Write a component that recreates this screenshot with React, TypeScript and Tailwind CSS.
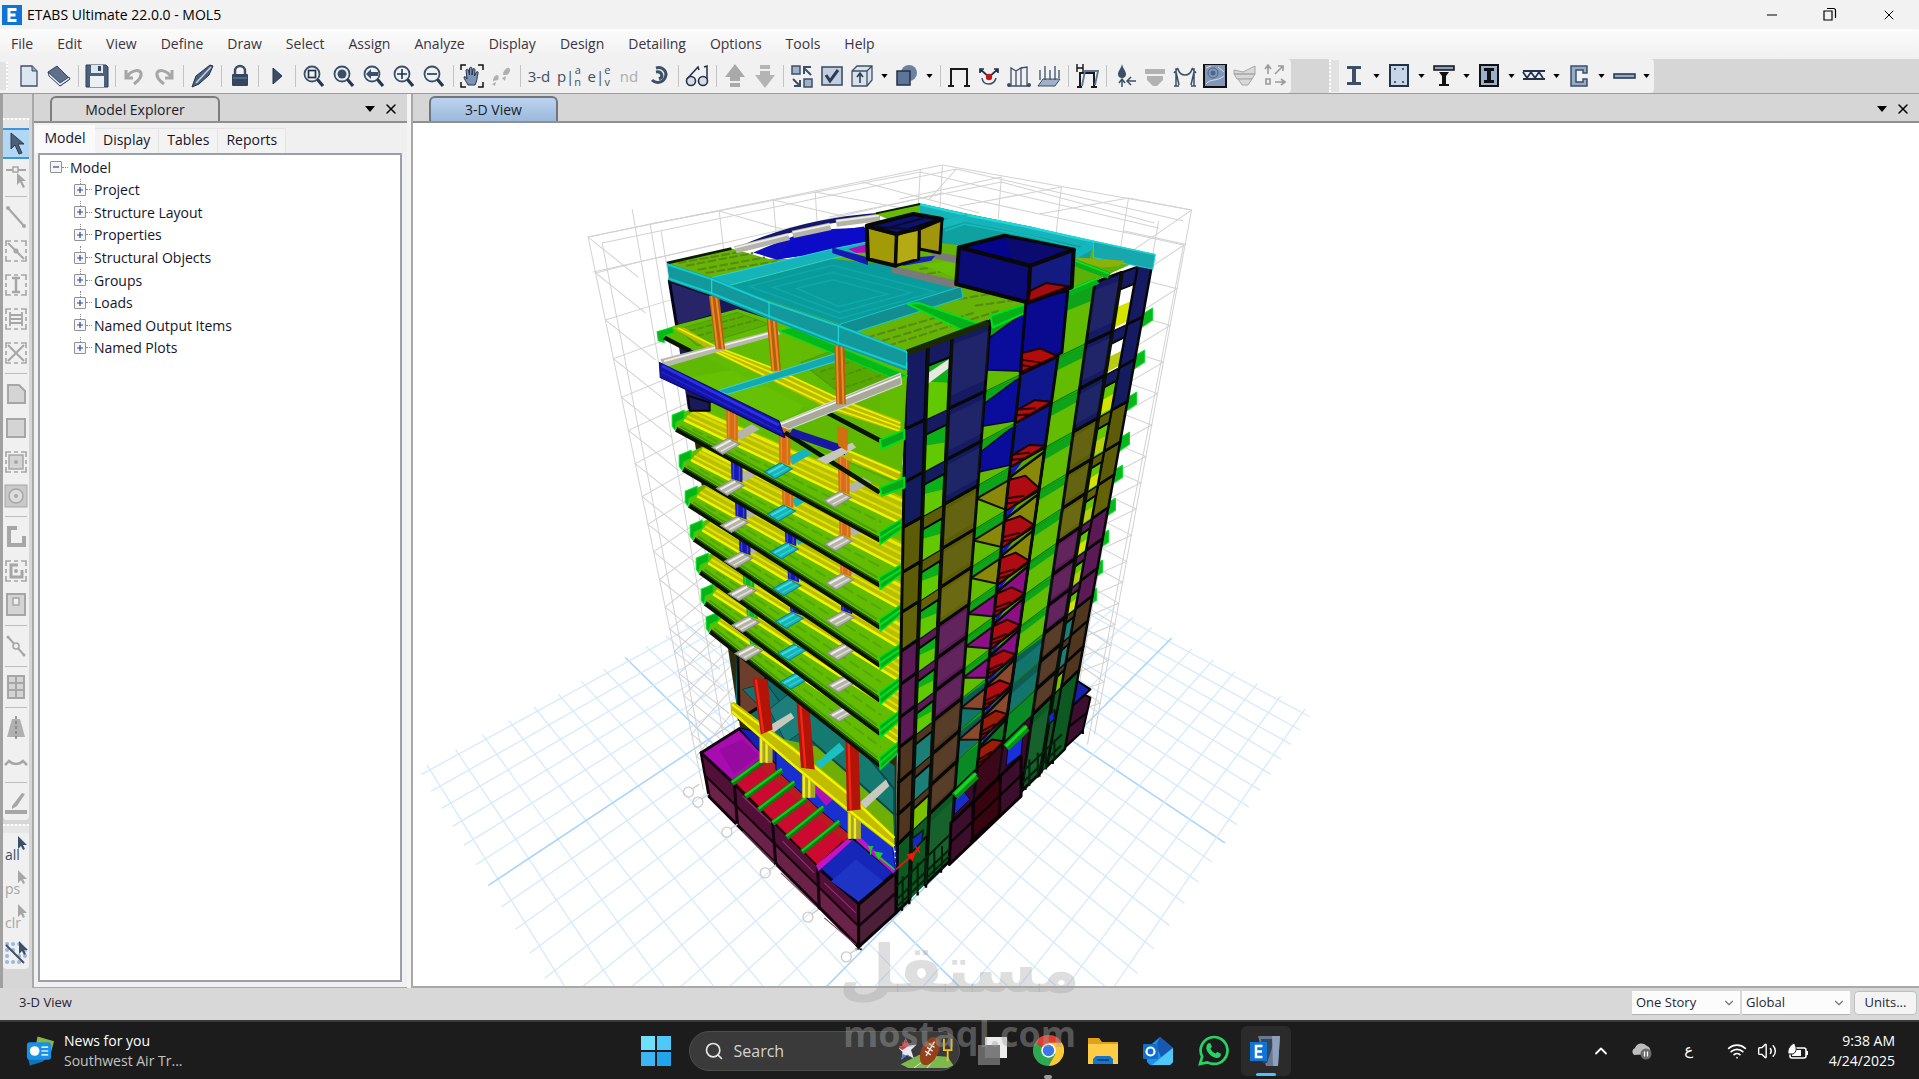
import React from "react";
import { ChevronUp, ChevronDown, Search, Minus, X, Wifi, Volume2 } from "lucide-react";

/* ---------- geometry helpers for the model drawing ---------- */
type Pt = [number, number];
type Ln = [number, number, number, number];

const pts = (a: Pt[]) => a.map((p) => `${p[0].toFixed(1)},${p[1].toFixed(1)}`).join(" ");

function cross(a: Ln, b: Ln): Pt {
  const [x1, y1, x2, y2] = a;
  const [x3, y3, x4, y4] = b;
  const d = (x1 - x2) * (y3 - y4) - (y1 - y2) * (x3 - x4);
  const p = x1 * y2 - y1 * x2;
  const q = x3 * y4 - y3 * x4;
  return [(p * (x3 - x4) - (x1 - x2) * q) / d, (p * (y3 - y4) - (y1 - y2) * q) / d];
}

/* Least-squares plane-to-screen projection through the given point pairs */
function homography(src: Pt[], dst: Pt[]) {
  const rows: number[][] = [];
  src.forEach(([u0, v0], i) => {
    const u = u0 / 10, v = v0 / 10;
    const x = dst[i][0] / 1000, y = dst[i][1] / 1000;
    rows.push([u, v, 1, 0, 0, 0, -u * x, -v * x, x]);
    rows.push([0, 0, 0, u, v, 1, -u * y, -v * y, y]);
  });
  const m: number[][] = [];
  for (let r = 0; r < 8; r++) {
    m.push([]);
    for (let c = 0; c < 9; c++) m[r].push(rows.reduce((s, row) => s + row[r] * row[c], 0));
  }
  for (let c = 0; c < 8; c++) {
    let p = c;
    for (let r = c; r < 8; r++) if (Math.abs(m[r][c]) > Math.abs(m[p][c])) p = r;
    [m[c], m[p]] = [m[p], m[c]];
    for (let r = 0; r < 8; r++) {
      if (r === c) continue;
      const f = m[r][c] / m[c][c];
      for (let k = c; k < 9; k++) m[r][k] -= f * m[c][k];
    }
  }
  const h = m.map((row, i) => row[8] / row[i]);
  return (u0: number, v0: number): Pt => {
    const u = u0 / 10, v = v0 / 10;
    const w = (h[6] * u + h[7] * v + 1) / 1000;
    return [(h[0] * u + h[1] * v + h[2]) / w, (h[3] * u + h[4] * v + h[5]) / w];
  };
}

const P = ({ d, f, s = "none", w = 1, o = 1 }: { d: string; f: string; s?: string; w?: number; o?: number }) => (
  <polygon points={d} fill={f} stroke={s} strokeWidth={w} opacity={o} strokeLinejoin="round" vectorEffect="non-scaling-stroke" />
);

/* ---------- ground grid ---------- */
const ground = homography(
  [[-8, 3], [6, -6], [18, 6], [10, 16], [-8, -6], [0, -6], [18, 10], [18, 16], [-8, 0]],
  [[1110, 612], [1128, 959], [553, 973], [627, 657], [1304, 715], [1218, 838], [497, 886], [437, 770], [1170, 643]]
);
function GroundGrid() {
  const out: React.ReactNode[] = [];
  for (let i = -8; i <= 18; i++) {
    const a = ground(i, -6.3), b = ground(i, 16.3);
    out.push(<line key={`a${i}`} x1={a[0]} y1={a[1]} x2={b[0]} y2={b[1]} stroke={i % 10 === 0 ? "#a9d5fb" : "#d6eafd"} strokeWidth={i % 10 === 0 ? 1.6 : 1.3} />);
  }
  for (let j = -6; j <= 16; j++) {
    const a = ground(-8.3, j), b = ground(18.3, j);
    out.push(<line key={`b${j}`} x1={a[0]} y1={a[1]} x2={b[0]} y2={b[1]} stroke={j % 10 === 0 ? "#a9d5fb" : "#d6eafd"} strokeWidth={j % 10 === 0 ? 1.6 : 1.3} />);
  }
  return <g>{out}</g>;
}

/* ---------- storey wire frame ---------- */
const rings = [0, 0.065, 0.15, 0.22, 0.29, 0.35, 0.41, 0.47, 0.52, 0.57, 0.62, 0.67, 0.71, 0.75, 0.79, 0.83, 0.86, 0.9, 0.94];
const frameLeft: Ln[] = [
  [589, 238, 704, 790], [603, 244, 712, 800], [651, 225, 738, 745], [662, 232, 745, 750], [720, 212, 776, 700], [633, 210, 730, 770], [774, 201, 810, 620], [816, 193, 840, 600],
];
const frameRight: Ln[] = [
  [1192, 211, 1095, 735], [1184, 246, 1088, 745], [1159, 222, 1072, 730], [1129, 199, 1050, 700], [1062, 188, 1010, 640], [1002, 178, 970, 600], [943, 167, 920, 560], [921, 170, 900, 560],
];
const at = (l: Ln, t: number): Pt => [l[0] + (l[2] - l[0]) * t, l[1] + (l[3] - l[1]) * t];
function WireFrame() {
  const seg: React.ReactNode[] = [];
  [...frameLeft, ...frameRight].forEach((l, i) => seg.push(<line key={i} x1={l[0]} y1={l[1]} x2={l[2]} y2={l[3]} />));
  rings.forEach((t, i) => {
    const a = at(frameLeft[0], t), b = at(frameLeft[2], t), c = at(frameLeft[4], t);
    seg.push(<polyline key={`l${i}`} points={pts([[a[0] + 50, a[1] + 40], a, b, c])} fill="none" />);
    const d = at(frameRight[0], t), e = at(frameRight[3], t), f = at(frameRight[1], t);
    seg.push(<polyline key={`r${i}`} points={pts([e, d, [f[0] - 60, f[1] + 12]])} fill="none" />);
  });
  return (
    <g stroke="#d2d2d2" strokeWidth={1}>
      {seg}
      <polyline fill="none" points="589,238 943,166 1192,211" />
      <polyline fill="none" points="603,244 957,170 1184,222" />
      <polyline fill="none" points="651,225 921,173 1159,229" />
      <polyline fill="none" points="594,273 720,245 943,194 1184,246" />
      <polyline fill="none" points="1155,224 1002,183 830,218" />
      <path fill="none" d="M1129 199L1040 215M1062 188L960 207M1002 178L900 200M957 170L930 200M774 201L900 230M720 212L800 235M816 193L930 214M863 183L980 214" />
    </g>
  );
}

/* ---------- tower: right-hand facade ---------- */
const cornerY = [352, 430, 483, 528, 573, 613, 652, 685, 718, 748, 783, 815, 845, 913];
const farPt: Pt[] = [[1153, 262], [1153, 313], [1145, 355], [1137, 397], [1130, 437], [1123, 470], [1116, 503], [1109, 535], [1103, 565], [1097, 593], [1090, 620], [1083, 648], [1078, 672], [1063, 752]];
const cornerX = (y: number) => 907 - ((y - 352) * 10) / 561;
const levels: Ln[] = cornerY.map((y, k) => [cornerX(y), y, farPt[k][0], farPt[k][1]]);
const V: Ln[] = [
  [907, 352, 897, 913], [928, 350, 912, 827], [952, 338, 929, 817], [991, 320, 950, 863], [1029, 303, 975, 793],
  [1068, 290, 1003, 750], [1096, 280, 1022, 793], [1122, 273, 1046, 740], [1138, 268, 1056, 720], [1153, 263, 1065, 752],
];
const on = (v: number, k: number, t: number): Pt => {
  const a = cross(V[v], levels[k]), b = cross(V[v], levels[k + 1]);
  return [a[0] + (b[0] - a[0]) * t, a[1] + (b[1] - a[1]) * t];
};
const mix = (a: Pt, b: Pt, t = 0.5): Pt => [a[0] + (b[0] - a[0]) * t, a[1] + (b[1] - a[1]) * t];
const wall = ["#151a62", "#151a62", "#141c60", "#5d5c06", "#5d5c06", "#646206", "#5b1a55", "#5b1a55", "#5b1a55", "#50351f", "#50351f", "#50351f", "#0c5a22"];
const inner = ["#00008c", "#10168a", "#10168a", "#10168a", "#8a8808", "#8a8808", "#8a8808", "#8b0f85", "#8b0f85", "#8b0f85", "#8c4a2c", "#8c4a2c", "#0a7a20"];

function RightFacade() {
  const out: React.ReactNode[] = [];
  const poly = (key: string, a: Pt[], f: string, s = "#0a0d0a", w = 2) => out.push(<polygon key={key} points={pts(a)} fill={f} stroke={s} strokeWidth={w} />);
  const quad = (key: string, a: number, b: number, k: number, t0: number, t1: number, f: string, s = "#0a0d0a", w = 2) =>
    poly(key, [on(a, k, t0), on(b, k, t0), on(b, k, t1), on(a, k, t1)], f, s, w);
  const beam = (a: number, b: number, k: number) => {
    const p = cross(V[a], levels[k]), q = cross(V[b], levels[k]);
    out.push(<line key={`gb${a}${k}`} x1={p[0] - 2} y1={p[1] - 3} x2={q[0]} y2={q[1] - 3} stroke="#0a8c18" strokeWidth={10} />);
    out.push(<line key={`gc${a}${k}`} x1={p[0] - 2} y1={p[1] - 5} x2={q[0]} y2={q[1] - 5} stroke="#00d616" strokeWidth={3} />);
    out.push(<line key={`gd${a}${k}`} x1={p[0] - 2} y1={p[1] + 1} x2={q[0]} y2={q[1] + 1} stroke="#00c010" strokeWidth={2} />);
  };
  for (let k = 12; k >= 0; k--) {
    for (const [a, b] of [[3, 4], [5, 6]]) {
      if (k > 10) { quad(`g${a}${k}`, a, b, k, 0, 1, k === 12 ? "#3a0a2c" : "#0a8a24", "#000", 1); continue; }
      quad(`g${a}${k}`, a, b, k, 0, 1, k > 8 ? "#12746a" : "#62bd02", "#1f6a00", 1);
      quad(`gs${a}${k}`, a, b, k, 0.02, 0.3, k > 8 ? "#0d5c56" : "#0ea318", "none", 0);
      if (a === 3 && k > 2) poly(`gt${k}`, [on(4, k, 0.3), on(4, k, 0.98), on(3, k, 0.3)], inner[k + 1], "#111", 2);
      if (a === 3 && k < 3) poly(`gu${k}`, [on(3, k, 0.25), on(4, k, 0.05), on(4, k, 0.95), on(3, k, 0.7)], "#0a0c9c", "#060640", 1.5);
    }
    if (k < 12) {
      quad(`s${k}`, 4, 5, k, 0, 1, k < 3 ? "#10168c" : k < 9 ? "#57a800" : "#157068");
      if (k < 3) {
        poly(`r${k}`, [on(4, k, 0.74), mix(on(4, k, 0.72), on(5, k, 0.72)), on(5, k, 0.96), on(4, k, 1)], "#b00e10", "#200000");
      } else {
        poly(`b${k}`, [on(4, k, 0), mix(on(4, k, 0), on(5, k, 0), 0.4), on(4, k, 0.3)], "#1018c0", "none", 0);
        poly(`t${k}`, [on(4, k, 0.25), on(5, k, 0.1), on(5, k, 0.95)], inner[k + 1], "#0a0a0a", 2.5);
        poly(`r${k}`, [on(4, k, 0.3), mix(on(4, k, 0.35), on(5, k, 0.5), 0.5), on(5, k, 0.95), on(4, k, 1.02)], k > 9 ? "#9c1c0a" : "#ae0c12", "#200000");
      }
      out.push(<path key={`rl${k}`} d={`M${on(4, k, 0.72)}L${mix(on(4, k, 0.9), on(5, k, 0.92), 0.55)}M${on(4, k, 0.84)}L${mix(on(4, k, 1), on(5, k, 0.96), 0.4)}`} stroke="#2a0000" strokeWidth={2} />);
    } else quad(`s${k}`, 4, 5, k, 0, 1, "#3a0818");
    if (k > 0 && k < 12) beam(3, 4, k);
    if (k > 0 && k < 10) beam(5, 6, k);
    if (k > 0 && k < 10) {
      const [x, y] = farPt[k];
      out.push(<polygon key={`tip${k}`} points={`${x - 20},${y + 8} ${x},${y - 4} ${x},${y + 8} ${x - 18},${y + 20}`} fill="#08b81a" stroke="#00e020" />);
    }
  }
  for (const v of [4, 5]) out.push(<line key={`sv${v}`} x1={V[v][0]} y1={V[v][1]} x2={V[v][2]} y2={V[v][3]} stroke="#080c08" strokeWidth={3} />);
  for (let k = 12; k >= 0; k--) {
    const c = wall[k];
    const open = k === 11 ? "#7cc000" : k === 12 ? "#0c5a22" : k > 8 ? "#1b7f78" : "#62c800";
    quad(`o${k}`, 1, 2, k, 0.3, 1, open, "none", 0);
    if (k < 9) poly(`oi${k}`, [on(1, k, 0.3), on(2, k, 0.3), on(2, k, 0.65), on(1, k, 0.5)], "#0cae1a", "none", 0);
    if (k === 0) poly("ow", [on(1, k, 0.4), on(2, k, 0.32), on(2, k, 0.44), on(1, k, 0.55)], "#e8e8e0", "none", 0);
    quad(`oo${k}`, 7, 8, k, 0.3, 1, k < 2 ? "#ffffff" : open, "#111", 1);
    if (k < 9) quad(`op${k}`, 7, 8, k, 0.6, 0.95, k % 2 ? "#b8cc10" : "#d4e400", "none", 0);
    quad(`p1${k}`, 0, 1, k, 0, 1, c, "#060806", 3);
    quad(`p2${k}`, 2, 3, k, 0, 1, c, "#060806", 3);
    quad(`sp${k}`, 1, 2, k, 0, 0.3, c, "#060806", 2);
    quad(`p3${k}`, 6, 7, k, 0, 1, c, "#060806", 3);
    quad(`p4${k}`, 8, 9, k, 0, 1, c, "#060806", 2.5);
    quad(`sq${k}`, 7, 8, k, 0, 0.3, c, "#060806", 2);
    quad(`h1${k}`, 2, 3, k, 0.14, 0.84, "#ffffff0c", "none", 0);
    quad(`h2${k}`, 6, 7, k, 0.14, 0.84, "#ffffff0c", "none", 0);
    for (const v of [1, 2, 7]) {
      const a = on(v, k, 0), b = on(v, k, 1);
      out.push(<line key={`v${v}${k}`} x1={a[0] + 1} y1={a[1]} x2={b[0] + 1} y2={b[1]} stroke="#0a0f08" strokeWidth={3} />);
    }
  }
  return <g strokeLinejoin="round">{out}</g>;
}

/* ---------- tower: left-hand facade ---------- */
const tips: Pt[] = [[667, 264], [658, 333], [661, 370], [673, 421], [680, 461], [686, 497], [691, 531], [697, 564], [702, 595], [707, 623]];
const ends = [0, 447, 495, 543, 588, 630, 668, 703, 736, 768];
const colX = [(y: number) => 716 + (y - 297) * 0.112, (y: number) => 774 + (y - 320) * 0.074, (y: number) => 841 + (y - 350) * 0.022];
const O = "#d96d10", B = "#1418b8", Gn = "#0cb81c";
const colTone: string[][] = [
  ["", "", "", O, B, B, B, Gn, Gn, Gn],
  ["", "", "", O, O, B, B, B, Gn, Gn],
  ["", "", "", O, O, O, B, B, B, Gn],
];
function stripY(k: number, x: number) {
  const [lx, ly] = tips[k];
  const cy = cornerY[k], cx = cornerX(cy);
  return ly - 2 + ((x - lx - 12) / (cx - lx - 12)) * (cy - ly + 2);
}
function LeftFacade() {
  const out: React.ReactNode[] = [];
  for (let k = 9; k >= 3; k--) {
    const [lx, ly] = tips[k];
    const ry = ends[k], cy = cornerY[k], cx = cornerX(cy);
    out.push(
      <g key={k}>
        <polygon points={pts([[lx, ly - 3], [lx + 24, ly - 14], [lx + 26, ly - 42], [cx, cy - 62], [cx, cy], [881, ry - 4], [lx + 4, ly + 8]])} fill="#62bd02" />
        <line x1={lx + 40} y1={ly - 18} x2={cx} y2={cy - 42} stroke="#4cb008" strokeWidth={3} />
        <polygon points={pts([[lx + 24, ly - 13], [cx, cy - 30], [cx, cy - 2], [lx + 11, ly]])} fill="#b9bf00" />
        <line x1={lx + 23} y1={ly - 11} x2={cx} y2={cy - 26} stroke="#e8ec00" strokeWidth={3} />
        <line x1={lx + 20} y1={ly - 8} x2={cx} y2={cy - 18} stroke="#d6da00" strokeWidth={2.5} />
        <line x1={lx + 15} y1={ly - 4} x2={cx} y2={cy - 10} stroke="#dfe300" strokeWidth={2} />
        <line x1={lx + 12} y1={ly} x2={cx} y2={cy - 3} stroke="#f2f400" strokeWidth={2.5} />
        <line x1={lx + 20} y1={ly + 9} x2={882} y2={ry - 20} stroke="#55a806" strokeWidth={2} strokeDasharray="12 4" />
        <line x1={lx + 8} y1={ly + 6} x2={878} y2={ry - 10} stroke="#48a008" strokeWidth={2} />
        <line x1={lx + 4} y1={ly + 9} x2={881} y2={ry - 2} stroke="#0a1404" strokeWidth={5} />
        <line x1={lx + 6} y1={ly + 8} x2={881} y2={ry - 4} stroke="#245a08" strokeWidth={1.3} />
        <polygon points={pts([[lx, ly - 5], [lx + 12, ly - 10], [lx + 12, ly - 2], [lx + 4, ly + 2], [lx + 3, ly + 10], [lx, ly + 6]])} fill="#06b41a" stroke="#00e01c" />
        <polygon points={pts([[880, ry - 10], [902, cy - 8], [902, cy + 2], [881, ry + 2]])} fill="#08a81a" stroke="#00e01c" strokeWidth={1.5} />
        <line x1={880} y1={ry - 4} x2={902} y2={cy - 3} stroke="#00e01c" strokeWidth={2} />
        {[0, 1, 2].map((c) => {
          const x0 = colX[c](cy - 40), y = stripY(k, x0), x = colX[c](y);
          const fill = c === 1 ? "#16b4bc" : "#b4b4aa";
          const yu = stripY(k - 1, x0);
          return (
            <g key={c}>
              <polygon points={pts([[x + 5, y - 12], [x + 20, y - 20], [x + 28, y - 15], [x + 8, y - 4]])} fill={fill} />
              <polygon points={pts([[x - 20, y + 3], [x - 4, y - 6], [x + 8, y], [x - 9, y + 10]])} fill={fill} stroke={c === 1 ? "#0a7f88" : "#8a8a80"} strokeWidth={1} />
              <line x1={x - 16} y1={y + 4} x2={x - 1} y2={y - 4} stroke={c === 1 ? "#40dce0" : "#efefe8"} strokeWidth={2} />
              <line x1={x - 11} y1={y + 7} x2={x + 4} y2={y - 1} stroke={c === 1 ? "#30ccd0" : "#e0e0d8"} strokeWidth={1.5} />
              <polygon points={pts([[x - 6, yu], [x + 6, yu], [x + 6, y - 3], [x - 5, y - 7]])} fill={colTone[c][k]} />
              <path d={`M${x - 3} ${yu}V${y - 7}M${x + 3} ${yu}V${y - 5}`} stroke="#ffffff30" strokeWidth={1.5} />
            </g>
          );
        })}
      </g>
    );
  }
  return <g>{out}</g>;
}

/* Podium, retaining walls and lobby storey */
function Podium() {
  return (
    <g transform="translate(660 700) scale(.33333)">
      <P d="1205,40 1243,-30 1293,-5 1270,95 1205,155" f="#3c0f30" s="#000" w={2} />
      <P d="1243,-30 1250,-58 1293,-30 1250,10 1205,45" f="#1a1fa8" s="#000" w={2} />
      <path d="M1205 100L1280 42" stroke="#0a0006" strokeWidth={6} />
      <P d="126,160 598,615 598,742 150,292" f="#6b2248" s="#12000a" w={3} />
      <P d="126,160 598,615 598,680 138,228" f="#521038" s="#12000a" w={2} />
      <path d="M225 250L235 380M340 370L350 498M475 500L480 630" stroke="#140010" strokeWidth={9} fill="none" />
      <path d="M250 290L335 370M250 395L345 490M370 425L465 520M365 520L470 620M495 550L590 640M495 655L590 735" stroke="#8a3868" strokeWidth={3} />
      <P d="126,160 240,88 320,170 222,250" f="#a80cae" s="#160016" w={3} />
      <P d="180,150 250,120 300,170 225,225" f="#8e0a98" o={0.7} />
      <P d="240,85 300,100 420,200 420,260 330,190" f="#1420b0" s="#050530" />
      <P d="225,250 330,178 580,400 475,500" f="#cc0a30" s="#300008" w={2} />
      <P d="330,178 580,400 555,425 305,205" f="#b81c20" />
      <P d="350,150 700,440 708,510 590,420 480,330 350,210" f="#1830d0" s="#060640" />
      <P d="470,250 520,300 500,320 460,270" f="#b010b8" />
      <P d="480,508 578,412 706,520 598,612" f="#1626b8" s="#02021c" w={3} />
      <P d="515,545 590,480 672,545 598,606" f="#1e34c4" />
      <P d="470,498 565,418 578,424 478,515" f="#c414c8" />
      <P d="600,410 712,515 706,526 588,420" f="#c414c8" />
      {[[218, 252, 310, 185], [258, 292, 368, 212], [298, 332, 405, 250], [340, 372, 440, 298], [382, 414, 492, 325], [428, 458, 540, 368]].map((q) => (
        <g key={q[0]}>
          <line x1={q[0]} y1={q[1]} x2={q[2]} y2={q[3]} stroke="#0a7c10" strokeWidth={17} />
          <line x1={q[0]} y1={q[1] - 4} x2={q[2]} y2={q[3] - 4} stroke="#12cc18" strokeWidth={7} />
        </g>
      ))}
      <P d="230,-170 410,-20 706,200 706,440 230,30" f="#0f6a68" />
      <P d="235,-165 320,-90 320,10 240,60" f="#6c3f2c" s="#0a0a0a" w={3} />
      <P d="250,-30 320,-50 400,60 310,30" f="#17706e" s="#064040" />
      <P d="330,30 430,-50 480,60 380,130" f="#1c7f7c" s="#0a4a4a" />
      <P d="330,110 600,170 700,330 705,420 560,330" f="#6fae06" />
      <P d="450,-10 560,90 705,270 705,345 560,215 440,110" f="#157a70" s="#0a4a48" w={2} />
      <P d="470,190 540,130 556,150 480,210" f="#1cc0c0" />
      <P d="600,310 680,240 690,260 615,330" f="#c8c8be" />
      <P d="320,85 395,40 405,55 335,105" f="#c8c8be" />
      {[[300, 110, 190], [428, 210, 295], [565, 335, 418]].map((q) => (
        <g key={q[0]}>
          <rect x={q[0]} y={q[1]} width={40} height={q[2] - q[1]} fill="#a8a42a" />
          <path d={`M${q[0] + 6} ${q[1]}v${q[2] - q[1]}M${q[0] + 22} ${q[1]}v${q[2] - q[1]}`} stroke="#f0ee20" strokeWidth={7} />
        </g>
      ))}
      <P d="215,10 225,8 400,140 560,270 705,408 705,448 555,330 400,200 215,40" f="#c0bc00" />
      <path d="M218 15L400 148L560 278L705 415M218 36L400 195L556 322L705 440" stroke="#f4f400" strokeWidth={7} fill="none" />
      <P d="280,-65 325,-60 340,90 305,105" f="#b21408" />
      <P d="410,-20 450,20 466,210 425,205" f="#b21408" />
      <P d="558,110 598,150 604,330 563,335" f="#b21408" />
      <path d="M290 -60L312 100M422 0L438 205M568 125L574 330" stroke="#f02818" strokeWidth={7} />
      <path d="M588 748l20 0M590 740l16 12M606 740l-16 12" stroke="#000" strokeWidth={3} />
      <g fill="none" stroke="#cccccc" strokeWidth={4}>
        {[[88, 278], [116, 308], [203, 398], [318, 520], [446, 653], [561, 772]].map((c) => (
          <g key={c[0]}>
            <circle cx={c[0]} cy={c[1]} r={15} />
            <path d={`M${c[0] + 12} ${c[1] - 10}l20 -14`} />
          </g>
        ))}
      </g>
    </g>
  );
}

/* Base walls, core mesh and axis triad that stand in front of the facade */
function BaseFront() {
  return (
    <g transform="translate(660 700) scale(.33333)">
      <P d="875,370 1085,170 1085,290 870,495" f="#3b0f2c" s="#0a0006" w={3} />
      <P d="945,308 1024,232 1020,345 938,420" f="#38040f" s="#0a0006" w={2} />
      <path d="M872 430L1085 228M940 310V415M1022 235V335" stroke="#0a0006" strokeWidth={7} />
      <P d="888,300 915,278 932,300 885,345" f="#1a2cc8" s="#060630" />
      <P d="1045,150 1090,110 1085,165 1040,200" f="#1830d8" s="#060630" />
      <path d="M886 290L950 228M1040 145L1102 85" stroke="#0a8c18" strokeWidth={24} />
      <path d="M886 284L950 222M1040 140L1102 80" stroke="#10dc20" strokeWidth={9} />
      <P d="598,615 710,520 710,640 598,742" f="#4c1f38" s="#0a0006" w={3} />
      <path d="M598 680L710 580" stroke="#140010" strokeWidth={8} />
      <P d="758,418 792,392 788,425 760,455" f="#1428c4" s="#03200c" w={1.5} />
      <P d="1168,50 1186,30 1184,60 1168,75" f="#1428e4" s="#03200c" w={1.5} />
      <path d="M712 600L870 450M712 560L872 405M730 530v90M752 510v90M775 490v90M800 470v90M825 450v80M848 440v70M712 622L870 470M1090 250L1205 138M1092 215L1207 105M1110 180v80M1135 160v75M1160 140v70M1185 120v60" stroke="#03200c" strokeWidth={6} />
      <path d="M728 622v12M750 602v12M775 578v10M800 555v10M845 510v10M1098 262v10M1140 222v10M1180 184v10M935 420v10M1020 340v10M1270 92v12" stroke="#000" strokeWidth={7} />
      <path d="M710 510L762 465" stroke="#f01808" strokeWidth={5} />
      <path d="M745 466l22 -6l-8 22zM768 440l14 20M782 440l-14 20" fill="#f01808" stroke="#f01808" strokeWidth={4} />
      <path d="M706 510L650 466" stroke="#10d820" strokeWidth={5} />
      <path d="M648 458l20 4l-10 14zM628 440l6 12l6 -12M634 452v14" fill="#10d820" stroke="#10d820" strokeWidth={4} />
      <path d="M708 440V515" stroke="#1020e8" strokeWidth={6} strokeDasharray="14 4" />
    </g>
  );
}

/* Roof slab, parapets, penthouse boxes and the two upper floors */
function RoofTop() {
  return (
    <g transform="translate(580 150) scale(.39541 .33333)">
      <P d="228,395 385,460 520,540 520,700 275,780 245,530" f="#1b1a58" />
      <P d="228,395 340,440 340,500 247,533" f="#272468" s="#050518" w={3} />
      {/* upper floors */}
      <P d="205,650 350,600 640,520 830,660 815,1000 505,830" f="#5fb802" />
      <P d="250,690 500,640 640,700 520,820" f="#66c004" />
      <P d="197,550 240,530 400,480 830,640 815,845 760,885" f="#62bd02" />
      <P d="250,540 400,490 480,525 300,590" f="#5cae06" s="#4c9c08" />
      <P d="560,640 650,600 800,680 690,760" f="#58a804" s="#4c9c08" />
      <path d="M280 545L420 500M300 560L450 512M580 650L665 612M610 668L700 632M640 690L740 650M670 715L780 672" stroke="#4a9406" strokeWidth={5} strokeDasharray="16 5" />
      <P d="505,545 540,535 830,680 800,690" f="#06b81a" s="#00dd1c" />
      <P d="505,815 760,700 760,870 640,800 600,900" f="#60b802" />
      <P d="275,740 330,760 330,785 280,785" f="#1b1a58" s="#060616" w={2} />
      <P d="235,535 265,535 345,592 500,662 670,752 812,815 812,850 640,785 480,690 345,612" f="#b9bb02" />
      <path d="M250 537L345 592L500 662L670 756L812 822M345 608L480 685L650 780L812 846M345 600L490 672L660 768L812 834" stroke="#eef000" strokeWidth={5} fill="none" />
      <P d="540,840 680,900 812,965 812,1000 690,940" f="#b9bb02" />
      <path d="M680 905L812 972M690 930L812 996" stroke="#f0f200" strokeWidth={6} />
      <P d="197,548 235,535 240,550 215,560 215,580 200,575" f="#06b81a" s="#00dd1c" />
      <path d="M215 565L280 605M610 780L762 875M520 850L760 1030M228 690L520 860" stroke="#0a1404" strokeWidth={13} fill="none" />
      <P d="205,630 500,540 510,555 345,610 215,655" f="#b8b8ac" />
      <P d="350,725 650,612 655,635 375,735" f="#14a8b0" s="#30d4d8" />
      <P d="500,825 812,672 815,705 530,840" f="#a8a89c" s="#d8d8d0" />
      <path d="M215 636L500 546M510 825L812 682" stroke="#f0f0ea" strokeWidth={5} />
      <P d="203,640 350,725 505,815 520,865 350,765 205,685" f="#1414a8" s="#0a0a70" />
      <path d="M210 650L505 828" stroke="#2c30e8" strokeWidth={8} />
      <path d="M208 668L512 850" stroke="#2024d0" strokeWidth={4} />
      <P d="540,838 672,890 672,918 530,858" f="#1818a0" />
      <P d="600,930 690,880 700,895 625,945" f="#c6c6ba" />
      <P d="760,872 822,842 822,870 765,900" f="#08a81a" s="#00e01c" w={2} />
      <P d="760,1015 822,985 822,1015 765,1040" f="#08a81a" s="#00e01c" w={2} />
      {/* columns */}
      {[[328, 440, 345, 600], [474, 510, 486, 665], [645, 590, 650, 765]].map((q) => (
        <g key={q[0]}>
          <P d={`${q[0]},${q[1]} ${q[0] + 26},${q[1]} ${q[2] + 24},${q[3]} ${q[2]},${q[3]}`} f="#b45e10" />
          <path d={`M${q[0] + 6} ${q[1]}L${q[2] + 5} ${q[3]}M${q[0] + 18} ${q[1]}L${q[2] + 18} ${q[3]}`} stroke="#f08a20" strokeWidth={5} />
        </g>
      ))}
      <P d="652,830 680,840 678,905 655,890" f="#d0700f" />
      {/* roof slab */}
      <P d="222,342 385,298 480,330 570,330 862,163 1456,315 1250,420 1130,465 830,612 660,560" f="#66b406" />
      <path d="M250 342L400 310M270 350L440 312M300 362L470 325M320 372L500 336M700 575L940 492M740 585L1000 490M780 590L1060 485M860 360L950 345M880 375L955 358M960 450L1060 430M1000 470L1110 452" stroke="#5a8a14" strokeWidth={6} strokeDasharray="22 6" />
      <path d="M222 342L385 298" stroke="#0d1c04" strokeWidth={8} />
      <P d="440,310 540,262 640,240 725,235 725,285 500,332" f="#1010c0" />
      <path d="M410 298Q560 215 760 198" stroke="#14186c" strokeWidth={14} fill="none" />
      <path d="M395 302L530 262M540 256L635 232M650 222L760 205" stroke="#b4b4a8" strokeWidth={22} />
      <path d="M395 296L530 256M540 250L635 226M650 216L760 199" stroke="#efefe8" strokeWidth={5} />
      <P d="540,272 640,246 720,232 725,285 570,320 500,330" f="#0c0cc8" />
      <P d="750,195 862,163 862,190 920,205 790,215" f="#66bb06" />
      <path d="M750 193L862 165" stroke="#0d1c04" strokeWidth={6} />
      <P d="862,163 980,195 1140,232 1300,280 1290,330 1130,310 900,280 862,200" f="#0fa0a0" />
      <path d="M925 245L975 225L1140 262L1270 300" stroke="#12bcbc" strokeWidth={5} fill="none" />
      <P d="862,163 980,195 1140,232 1300,276 1300,300 1140,258 980,220 862,190" f="#16b4b8" />
      <path d="M862 166L980 198L1140 236L1300 278L1456 318" stroke="#1fd8dc" strokeWidth={7} fill="none" />
      <P d="1300,278 1456,318 1450,360 1300,325" f="#16a8ac" s="#1fd0d4" />
      <P d="1250,305 1295,275 1300,300 1255,330" f="#14b8bc" />
      <P d="1260,325 1380,335 1350,365 1250,345" f="#8ab20a" />
      <P d="870,230 980,195 985,215 900,245" f="#17b8bc" />
      <P d="335,385 640,300 730,278 730,306 640,328 350,418" f="#16b4b8" s="#20d4d8" />
      <P d="375,412 640,330 770,345 960,415 660,525" f="#0a9c9c" />
      <path d="M430 412L640 348L900 428L660 508zM490 415L640 370L840 430L658 490zM550 418L642 392L780 435L656 472z" stroke="#0fa9a9" strokeWidth={4} fill="none" />
      <P d="660,525 965,412 970,445 670,560" f="#128e90" s="#18c8cc" />
      <P d="222,342 335,385 480,455 655,525 828,605 825,665 655,590 475,508 330,438 228,395" f="#13999c" />
      <path d="M222 346L335 390L480 460L655 530L828 608M225 388L330 430L478 500L655 582L826 655" stroke="#14ccd0" strokeWidth={6} fill="none" />
      <path d="M335 388V435M480 458V505M655 528V585M828 605V660" stroke="#0fdfe3" strokeWidth={3} />
      <P d="680,300 730,285 730,310 700,312" f="#b80cb8" />
      <P d="640,295 730,325 730,348 640,312" f="#1418b4" />
      <P d="860,345 960,335 960,390" f="#6ac004" />
      <P d="790,350 955,395 950,418 790,370" f="#7a7a7a" />
      <P d="890,308 960,320 960,345 890,325" f="#7a7a7a" />
      <P d="800,330 900,320 890,335 820,350" f="#1420c0" />
      <P d="830,465 860,462 1015,525 980,550" f="#06b01a" s="#00e01c" w={2} />
      <P d="1040,500 1130,465 1130,490 1045,535" f="#06b01a" s="#00e01c" w={2} />
      <path d="M830 610L1035 520" stroke="#1a2a04" strokeWidth={18} />
      <P d="1250,330 1320,355 1380,350 1300,400 1230,420" f="#5cb00a" />
      <path d="M1252 340L1340 380M1230 435L1310 395" stroke="#08b01a" strokeWidth={20} />
      <path d="M1252 334L1340 374M1230 428L1310 388" stroke="#10e020" strokeWidth={5} />
      {/* stair tower box */}
      <P d="1130,450 1235,425 1220,610 1115,670" f="#0a0a90" s="#050518" w={3} />
      <P d="1165,598 1208,620 1118,668 1120,612" f="#b00c0c" s="#200" w={2} />
      <path d="M1120 632L1165 640M1120 648L1145 654" stroke="#2a0000" strokeWidth={5} />
      <P d="960,295 1075,260 1250,302 1140,350" f="#04048c" s="#080808" w={4} />
      <P d="1075,265 1240,302 1140,345 1095,330" f="#0a0a70" />
      <P d="960,295 1140,350 1135,460 953,405" f="#0c0c78" s="#080808" w={4} />
      <P d="1140,350 1250,302 1245,415 1135,460" f="#131a80" s="#080808" w={4} />
      <P d="1140,425 1180,402 1238,412 1135,458" f="#a40c10" s="#200" w={2} />
      {/* lift machine room */}
      <P d="727,232 803,255 800,350 730,330" f="#a39a08" s="#0a0a04" w={4} />
      <P d="803,255 860,240 858,330 800,350" f="#b4aa14" s="#0a0a04" w={3} />
      <P d="860,240 917,212 912,312 860,300" f="#a0960c" s="#0a0a04" w={3} />
      <P d="727,230 845,195 917,210 803,255" f="#0c1270" s="#080808" w={4} />
      <path d="M770 240L880 204M745 232L862 243" stroke="#0a0a30" strokeWidth={6} />
    </g>
  );
}

function ModelView() {
  return (
    <svg viewBox="414 124 1505 863" preserveAspectRatio="xMinYMin slice" className="block h-full w-full" role="img" aria-label="3-D structural model">
      <GroundGrid />
      <WireFrame />
      <polygon points="670,282 900,360 897,850 742,735 727,637 700,470" fill="#2c2a0c" />
      <Podium />
      <LeftFacade />
      <RightFacade />
      <BaseFront />
      <RoofTop />
    </svg>
  );
}

/* ---------- toolbar icons ---------- */
const NAVY = "#3c4f68";
const G = "#a6a6a6";
const mag = (content: React.ReactNode) => (
  <>
    <circle cx="10" cy="10" r="7.5" fill="#eef2f6" stroke={NAVY} strokeWidth="1.8" />
    <path d="M15.5 15.5L21 22" stroke="#25384f" strokeWidth="3.2" />
    {content}
  </>
);
const dash = <path d="M2 7V2h5M10 2h4M17 2h5v5M22 10v4M22 17v5h-5M14 22h-4M7 22H2v-5M2 14v-4" stroke={G} strokeWidth="1.6" fill="none" />;
const ptr = (f: string) => <path d="M15 1v13l3-3 2 4 2-1-2-4h4z" fill={f} />;

const icons: Record<string, React.ReactNode> = {
  new: <><path d="M4 2h11l5 5v15H4z" fill="#dce6f2" stroke={NAVY} strokeWidth="1.3" /><path d="M15 2v5h5" fill="#8fa5c0" stroke={NAVY} /></>,
  open: <><path d="M1 8l9-6 13 13-10 7z" fill="#5d718c" stroke="#34465e" /><path d="M1 8l1 4 11 10 10-7-1-2-9 6z" fill="#e8eef5" stroke="#34465e" /></>,
  save: <><path d="M1 1h20l2 2v20H1z" fill="#4b607c" stroke="#2d3f57" /><rect x="6" y="1" width="12" height="8" fill="#dfe5ec" /><rect x="13" y="2" width="3" height="5" fill="#34465e" /><rect x="5" y="12" width="14" height="11" fill="#eceff3" /></>,
  undo: <path d="M4 6v8h7M5 13c4-7 12-8 14-4 1 4-3 8-7 11" fill="none" stroke={G} strokeWidth="3" />,
  redo: <path d="M20 6v8h-7M19 13C15 6 7 5 5 9c-1 4 3 8 7 11" fill="none" stroke={G} strokeWidth="3" />,
  pen: <><path d="M2 23l4-11L20 1l3 1-4 9-10 9z" fill="#4b607c" stroke="#22324a" /><path d="M6 19L21 3" stroke="#c7d2df" strokeWidth="1.5" /></>,
  lock: <><path d="M7 11V7a5 5 0 0110 0v4" fill="none" stroke={NAVY} strokeWidth="2.5" /><rect x="4" y="10" width="16" height="12" rx="1" fill="#34465e" /><path d="M5 14h14" stroke="#7187a3" /></>,
  play: <path d="M8 4l9 8-9 8z" fill={NAVY} stroke="#22324a" />,
  z1: mag(<rect x="6.5" y="6.5" width="7" height="7" fill="none" stroke="#22324a" strokeWidth="1.7" />),
  z2: mag(<circle cx="10" cy="10" r="4.5" fill={NAVY} />),
  z3: mag(<path d="M4 10l5-5v3h7v4H9v3z" fill={NAVY} />),
  z4: mag(<path d="M10 5v10M5 10h10" stroke="#22324a" strokeWidth="1.6" />),
  z5: mag(<path d="M5 10h10" stroke="#22324a" strokeWidth="1.6" />),
  hand: <><path d="M1 6V1h5M18 1h5v5M23 18v5h-5M6 23H1v-5" stroke="#111" strokeWidth="1.5" fill="none" /><path d="M8 21c-2-4-4-6-4-8 1-1 2 0 3 2L6 6c1-1 2-1 2.5 0l1 5V4c1-1 2-1 2.500 0v7l1-6c1-1 2 0 2 1l-.5 6 2-4c1-1 2 0 1.500 1.500-1 4-1 8-3 11.500z" fill="#7c93b3" stroke="#22324a" /></>,
  feet: <path d="M3 17c0-3 2-6 4-6s2 3 1 5zM2 20l4-2-1 4zM13 11c0-4 4-8 6-7s1 5-2 7zM12 14l4-2-1 5z" fill="#b0b0b0" />,
  rot: <path d="M9 4c7-2 12 4 9 10-3 5-9 6-13 2M9 8c6-1 8 5 3 7" fill="none" stroke={NAVY} strokeWidth="3" />,
  glass: <><circle cx="6" cy="17" r="4.5" fill="#d5dde7" stroke="#22324a" strokeWidth="1.6" /><circle cx="18" cy="17" r="4.5" fill="#d5dde7" stroke="#22324a" strokeWidth="1.6" /><path d="M2 15L13 3l1 3M22 15V2l-3 1" stroke="#22324a" strokeWidth="1.5" fill="none" /></>,
  up: <path d="M12 0l10 13h-5v4H7v-4H2zM7 19h10v4H7z" fill="#a9a9a9" />,
  down: <path d="M12 24L2 11h5V7h10v4h5zM7 1h10v4H7z" fill="#b4b4b4" />,
  swap: <><path d="M2 2h8v8H2zM14 15h8v8h-8z" fill="#9fb1c8" stroke={NAVY} strokeWidth="1.5" /><path d="M21 11l-7-7M14 10V3h7M3 15l7 7M10 16v6H4" stroke={NAVY} strokeWidth="2" fill="none" /></>,
  check: <><rect x="2" y="3" width="20" height="18" fill="#c3cfdf" stroke={NAVY} strokeWidth="1.6" /><path d="M6 11l4 6 8-11" stroke="#2b3d55" strokeWidth="3" fill="none" /></>,
  cube: <><path d="M2 7l5-5h15v14l-5 6H2zM2 7h15v15M17 7l5-5" fill="#d9e1eb" stroke={NAVY} strokeWidth="1.3" /><path d="M10 19v-8M7 13l3-4 3 4" stroke="#22324a" strokeWidth="1.5" fill="none" /></>,
  obj: <><circle cx="14" cy="9" r="8" fill="#6b81a0" /><rect x="2" y="7" width="13" height="14" fill="#5d7597" stroke="#22324a" strokeWidth="1.5" /></>,
  frame: <path d="M4 22V5h16v17M1 22h6M17 22h6" stroke="#1a1a1a" strokeWidth="2" fill="none" />,
  joint: <><path d="M12 13L3 5M12 13l9-8M3 9V5h4M17 5h4v4" stroke="#22324a" strokeWidth="1.7" fill="none" /><path d="M5 14c1 8 12 8 14 0" stroke={NAVY} fill="none" strokeWidth="1.5" /><circle cx="12" cy="13" r="3.2" fill="#c01818" /></>,
  dist: <><path d="M1 22h22M4 22V4l5 3v15M9 7l5-3v18M14 4l6-1v19M20 3v19" stroke={NAVY} strokeWidth="1.3" fill="none" /><circle cx="2" cy="21" r="2" fill={NAVY} /><circle cx="22" cy="21" r="2" fill={NAVY} /></>,
  area: <><path d="M1 22l5-7h17l-5 7z" fill="#9fb1c8" stroke={NAVY} /><path d="M3 6v10M8 2v14M13 6v10M18 2v14M22 6v8" stroke={NAVY} strokeWidth="1.3" /></>,
  hframe: <><path d="M2 0v8M8 0v8M2 4h6" stroke="#111" strokeWidth="1.4" /><path d="M5 23V9h14v14M2 23h5M16 23h6" stroke="#1a1a1a" strokeWidth="2" fill="none" /><path d="M7 22L10 7h13l-3 14" stroke="#5d7597" strokeWidth="1.8" fill="none" /></>,
  deck: <path d="M2 5h20v5H2zM4 12h16v4l-3 3-3 3h-4l-3-3-3-3z" fill="#b2b2b2" />,
  drop: <><path d="M9 0c1 5 4 7 4 10a4 4 0 01-8 0c0-3 3-5 4-10z" fill={NAVY} /><path d="M9 23v-7M6 19l3-4 3 4M23 17h-8M18 13l-4 4 4 4" stroke={NAVY} strokeWidth="1.5" fill="none" /></>,
  bent: <path d="M3 22V5h2c2 8 12 8 14 0h2v17M1 22h5M18 22h5M1 9l4-5M23 9l-4-5M6 21L3 8M18 21l3-13" stroke={NAVY} strokeWidth="1.5" fill="none" />,
  contour: <><rect x="1" y="0" width="22" height="23" fill="#8298bb" stroke="#111" strokeWidth="2" /><circle cx="10" cy="9" r="5" fill="none" stroke="#4d658a" /><circle cx="10" cy="9" r="2.5" fill="#4d658a" /><path d="M3 20c5-6 10-2 18-8M3 4l5-2M15 3l6 5" stroke="#cfdaea" fill="none" /></>,
  shell: <><path d="M1 6l9 2 12-6v8H1zM1 10h21l-3 5H4z" fill="#d8d8d8" stroke={G} /><path d="M5 15h14l-4 6H9z" fill="#d8d8d8" stroke={G} /></>,
  axes: <path d="M5 10V2M2 5l3-4 3 4M12 10l8-8M15 2h5v5M3 15h4v5H3zM12 18h9M18 15l4 3-4 3" stroke="#9b9b9b" strokeWidth="1.6" fill="none" />,
  sI: <path d="M5 2h14v3h-5v13h5v3H5v-3h5V5H5z" fill={NAVY} />,
  sRect: <><rect x="3" y="1" width="18" height="21" fill="#c6d5e8" stroke="#22324a" strokeWidth="2" /><path d="M7 5h2M15 5h2M7 18h2M15 18h2" stroke="#22324a" strokeWidth="1.5" /></>,
  sT: <><rect x="2" y="2" width="20" height="4" fill="#8ba3c3" stroke="#111" strokeWidth="1.5" /><path d="M7 8h10l-3 4v8h3v2H7v-2h3v-8z" fill="#111" /></>,
  sEnc: <><rect x="3" y="1" width="18" height="21" fill="#9db0cb" stroke="#111" strokeWidth="2" /><path d="M7 4h10v3h-3v9h3v3H7v-3h3V7H7z" fill="#111" /></>,
  sJoist: <path d="M1 7h22M1 15h22M1 8l4 6 4-6 4 6 4-6 4 6" stroke="#22324a" strokeWidth="1.8" fill="none" />,
  sC: <path d="M4 2h16v7h-4V6H9v12h7v-3h4v7H4z" fill="#93aac9" stroke={NAVY} strokeWidth="1.5" />,
  sPlate: <rect x="2" y="10" width="21" height="4" fill="#93aac9" stroke="#22324a" strokeWidth="1.5" />,
  cursor: <path d="M7 1v16l4-4 4 9 3-1-4-9h6z" fill="#4f6178" stroke="#2a3a50" />,
  reshape: <><path d="M2 6h7M14 6h8" stroke={G} strokeWidth="2" /><rect x="9" y="3" width="5" height="5" fill="none" stroke={G} strokeWidth="1.5" /><path d="M13 9v12l3-3 3 6 2-1-3-6h4z" fill={G} /></>,
  line: <><path d="M4 3l16 18" stroke={G} strokeWidth="2.2" /><circle cx="4" cy="3" r="2" fill={G} /><circle cx="20" cy="21" r="2" fill={G} /></>,
  dline: <>{dash}<path d="M4 4l16 16" stroke={G} strokeWidth="2" /><circle cx="12" cy="12" r="2.5" fill={G} /></>,
  dcol: <>{dash}<path d="M8 5h8M8 19h8M12 5v14" stroke={G} strokeWidth="2.5" /></>,
  dsec: <>{dash}<path d="M6 5v14M18 5v14M6 8h12M6 12h12M6 16h12" stroke={G} strokeWidth="1.8" /></>,
  dbrace: <>{dash}<path d="M4 4l16 16M20 4L4 20" stroke={G} strokeWidth="2" /></>,
  poly: <path d="M4 3h11l6 6v12H4z" fill="#d4d4d4" stroke={G} strokeWidth="2" />,
  rect: <rect x="3" y="3" width="18" height="18" fill="#d4d4d4" stroke={G} strokeWidth="2" />,
  drect: <>{dash}<rect x="5" y="5" width="14" height="14" fill="#d4d4d4" stroke={G} strokeWidth="1.5" /><circle cx="12" cy="12" r="2" fill={G} /></>,
  circ: <><rect x="1" y="1" width="22" height="22" fill="#c9c9c9" stroke={G} /><circle cx="12" cy="12" r="7" fill="#ddd" stroke={G} strokeWidth="1.5" /><circle cx="12" cy="12" r="2" fill={G} /></>,
  wallc: <path d="M13 3H5v17h15v-9" stroke={G} strokeWidth="4" fill="none" />,
  dwallc: <>{dash}<path d="M14 6H7v12h11v-7" stroke={G} strokeWidth="3" fill="none" /><circle cx="12" cy="12" r="2" fill={G} /></>,
  opening: <><rect x="3" y="1" width="18" height="21" fill="#d4d4d4" stroke={G} strokeWidth="2" /><rect x="9" y="5" width="6" height="7" fill="#eee" stroke={G} strokeWidth="1.5" /></>,
  link: <><path d="M4 3l16 18" stroke={G} strokeWidth="2" /><circle cx="12" cy="12" r="3" fill="#eee" stroke={G} strokeWidth="1.6" /><circle cx="4" cy="3" r="1.5" fill={G} /><circle cx="20" cy="21" r="1.5" fill={G} /></>,
  gridw: <path d="M4 1h16v22H4zM4 8h16M4 15h16M12 1v22" fill="#d4d4d4" stroke={G} strokeWidth="2" />,
  tower: <><path d="M8 3h8l5 18H3z" fill="#b0b0b0" /><path d="M12 0v24" stroke="#7d7d7d" strokeWidth="1.5" strokeDasharray="3 2" /></>,
  wave: <path d="M1 15l4-4c4 4 10 4 14 0l4 4" stroke={G} strokeWidth="2.5" fill="none" />,
  draw: <><path d="M8 15L18 2l3 1-8 12-5 3z" fill={G} /><path d="M1 21h22" stroke={G} strokeWidth="4" /></>,
  snap: <><path d="M3 4h.1M9 4h.1M15 4h.1M3 10h.1M9 10h.1M21 10h.1M3 16h.1M15 16h.1M21 16h.1M3 22h.1M9 22h.1M15 22h.1" stroke="#9fb9d8" strokeWidth="4" strokeLinecap="round" /><path d="M2 5l18 18" stroke={NAVY} strokeWidth="2" />{ptr(NAVY)}</>,
};

const Ico = ({ n }: { n: string }) => (
  <svg viewBox="0 0 24 24" className="h-6 w-6" fill="none" aria-hidden="true">{icons[n]}</svg>
);

const topBar = "new open | save ! undo redo | pen | lock ! play ! z1 z2 z3 z4 z5 | hand feet ! t:3-d t:plan t:elev t:nd rot | glass | up down ! swap check cube v obj v ! frame joint dist area | hframe | drop deck bent contour shell axes".split(" ");
const sectionBar = "sI v sRect v sT v sEnc v sJoist v sC v sPlate v".split(" ");

function ToolText({ n }: { n: string }) {
  if (n === "3-d") return <span className="text-[15px] text-[#3c4f68]">3-d</span>;
  if (n === "nd") return <span className="text-[15px] text-[#adadad]">nd</span>;
  const [a, b, c] = n === "plan" ? ["p|", "a", "n"] : ["e|", "e", "v"];
  return (
    <span className="flex items-center text-[15px] text-[#3c4f68]">
      {a}
      <span className="flex flex-col text-[11px] leading-[12px]"><span>{b}</span><span>{c}</span></span>
    </span>
  );
}

function ToolItem({ n }: { n: string }) {
  if (n === "|") return <span className="flex w-2 shrink-0 justify-center"><span className="h-[22px] w-px bg-[#c4c4c4]" /></span>;
  if (n === "!") return <span className="flex w-[7px] shrink-0 justify-center"><span className="h-[22px] w-px bg-[#c4c4c4]" /></span>;
  if (n === "v")
    return (
      <button aria-label="More" className="flex h-full w-[15px] shrink-0 items-center justify-center">
        <svg viewBox="0 0 8 5" className="h-1 w-[7px]"><path d="M0 0h8L4 5z" fill="#000" /></svg>
      </button>
    );
  return (
    <button aria-label={n.replace("t:", "")} className="flex h-full w-[30px] shrink-0 items-center justify-center">
      {n.startsWith("t:") ? <ToolText n={n.slice(2)} /> : <Ico n={n} />}
    </button>
  );
}

const menus = ["File", "Edit", "View", "Define", "Draw", "Select", "Assign", "Analyze", "Display", "Design", "Detailing", "Options", "Tools", "Help"];
const sideTools = "cursor reshape - line dline dcol dsec dbrace - poly rect drect circ - wallc dwallc opening - link - gridw - tower wave - draw".split(" ");
const tree = ["Project", "Structure Layout", "Properties", "Structural Objects", "Groups", "Loads", "Named Output Items", "Named Plots"];

function SideBar() {
  return (
    <div className="flex w-8 shrink-0 flex-col border-l-[3px] border-[#a0a0a0] bg-[#d6d6d6] pr-[3px]">
      <div className="h-6 shrink-0" />
      <div className="h-2.5 shrink-0 border-t-2 border-dotted border-white bg-[#e6e6e6]" />
      <div className="flex flex-col items-center rounded-b bg-[#f0f0f0]">
        {sideTools.map((n, i) =>
          n === "-" ? (
            <span key={i} className="flex h-[7px] w-full items-center px-0.5"><span className="h-px w-full bg-[#bdbdbd]" /></span>
          ) : (
            <button key={i} aria-label={n} className={n === "cursor" ? "flex h-[31px] w-full items-center justify-center border-y-2 border-[#3d95dc] bg-[#b2d7f2]" : "flex h-[34px] w-full items-center justify-center"}>
              <Ico n={n} />
            </button>
          )
        )}
      </div>
      <div className="mt-1 h-[9px] shrink-0 border-t-2 border-dotted border-white bg-[#e6e6e6]" />
      <div className="flex flex-col items-center rounded-b bg-[#f0f0f0]">
        {["all", "ps", "clr"].map((n) => (
          <button key={n} aria-label={`Select ${n}`} className={n === "all" ? "relative flex h-[34px] w-full items-end pb-1 pl-0.5 text-[14px] leading-4 text-[#3c4f68]" : "relative flex h-[34px] w-full items-end pb-1 pl-0.5 text-[14px] leading-4 text-[#a6a6a6]"}>
            {n}
            <svg viewBox="0 0 24 24" className="absolute right-0.5 top-0.5 h-6 w-6" aria-hidden="true">{ptr(n === "all" ? NAVY : G)}</svg>
          </button>
        ))}
        <button aria-label="snap" className="flex h-[34px] w-full items-center justify-center"><Ico n="snap" /></button>
      </div>
    </div>
  );
}

function Expander({ open }: { open?: boolean }) {
  return (
    <button aria-label={open ? "Collapse" : "Expand"} className="flex h-3 w-3 shrink-0 items-center justify-center rounded-[1px] border border-[#919191] bg-[#f6f6f6]">
      <svg viewBox="0 0 8 8" className="h-2 w-2"><path d={open ? "M1 4h6" : "M1 4h6M4 1v6"} stroke="#2b4a9b" strokeWidth="1.2" /></svg>
    </button>
  );
}

function PaneButtons() {
  return (
    <span className="flex items-center gap-2">
      <button aria-label="Pane menu"><svg viewBox="0 0 10 6" className="h-1.5 w-2.5"><path d="M0 0h10L5 6z" fill="#000" /></svg></button>
      <button aria-label="Close pane"><X className="h-4 w-4 text-black" strokeWidth={2.2} /></button>
    </span>
  );
}

function Explorer() {
  return (
    <section className="flex w-[375px] shrink-0 flex-col border-b border-l-2 border-[#a8a8a8] bg-[#f0f0f0]">
      <header className="flex h-[29px] shrink-0 items-end border-b-2 border-[#8f8f8f] bg-[#d6d6d6] pl-4 pr-2">
        <h2 className="flex h-[25px] w-[170px] items-center justify-center rounded-t-md border-2 border-b-0 border-[#7d7d7d] bg-[#d9d9d9] text-[14px] text-[#1b1b2b]">Model Explorer</h2>
        <span className="ml-auto flex h-full items-center pt-0.5"><PaneButtons /></span>
      </header>
      <div role="tablist" className="flex h-[30px] shrink-0 items-end pl-px text-[14px] text-[#15152a]">
        <button role="tab" aria-selected="true" className="h-7 w-[60px] bg-[#fafafa] pb-1">Model</button>
        {["Display", "Tables", "Reports"].map((t) => (
          <button key={t} role="tab" className="h-[25px] border-r border-t border-[#e4e4e4] bg-[#f3f3f3] px-2 pb-1">{t}</button>
        ))}
      </div>
      <div className="mb-[5px] ml-1 mr-[5px] flex-1 border-2 border-[#9a9fac] bg-white pl-2.5 pt-px">
        <div className="flex h-[203px] flex-col text-[14px] text-[#15152a]">
          <div className="flex flex-1 items-center"><Expander open /><span className="mr-0.5 w-1.5 border-t border-dotted border-[#8a8a8a]" />Model</div>
          {tree.map((t) => (
            <div key={t} className="flex flex-1 items-center pl-6">
              <span className="flex h-full flex-col items-center">
                <span className="flex-1 border-l border-dotted border-[#8a8a8a]" />
                <Expander />
                <span className="flex-1" />
              </span>
              <span className="mr-0.5 w-1.5 border-t border-dotted border-[#8a8a8a]" />
              {t}
            </div>
          ))}
        </div>
      </div>
    </section>
  );
}

/* ---------- task bar ---------- */
const task = "flex h-12 w-[55px] shrink-0 items-center justify-center";
function TaskBar() {
  return (
    <footer className="flex h-[59px] shrink-0 items-center border-t-2 border-[#3a3a3a] bg-[#1c1c1c] text-white">
      <div className="flex-1">
        <button className="flex items-center gap-2.5 pl-[25px] text-left">
          <svg viewBox="0 0 30 30" className="h-[30px] w-[29px]" aria-hidden="true">
            <path d="M13 0l17 5-4 15-16-5z" fill="#8bb836" />
            <path d="M2 18l20 5-4 3-13 4z" fill="#0b78b8" />
            <rect x="2" y="6" width="25" height="18" rx="3" fill="#1b8ee6" />
            <circle cx="10" cy="15" r="5" fill="#fff" /><path d="M17 11h7M17 15h7M17 19h7" stroke="#c8f0ff" strokeWidth="1.8" />
          </svg>
          <span className="text-[14px] leading-5"><span className="block">News for you</span><span className="block text-[#c4c4c4]">Southwest Air Tr...</span></span>
        </button>
      </div>
      <nav className="flex items-center">
        <button aria-label="Start" className={task}>
          <svg viewBox="0 0 30 30" className="h-[30px] w-[30px]"><path d="M0 0h14v14H0z" fill="#6ee0fb" /><path d="M16 0h14v14H16z" fill="#4fc8f7" /><path d="M0 16h14v14H0z" fill="#3bb6f3" /><path d="M16 16h14v14H16z" fill="#23a5ee" /></svg>
        </button>
        <label className="relative ml-[5px] mr-1.5 flex h-10 w-[271px] items-center rounded-full border border-[#4d4d4d] bg-[#3a3a3a] pl-3.5">
          <Search className="h-5 w-5 shrink-0 text-[#e6e6e6]" />
          <input aria-label="Search" placeholder="Search" className="ml-2.5 w-32 bg-transparent text-[16px] text-white outline-none placeholder:text-[#d4d4d4]" />
          <svg viewBox="0 0 56 34" className="absolute right-1 top-1 h-8 w-14" aria-hidden="true">
            <path d="M0 30l20-10 30 2 6 9-6 3H8z" fill="#7db84c" /><path d="M14 34l18-13M28 34l10-12" stroke="#dff0cf" />
            <path d="M5 2l4 8 8-1-6 6 3 9-7-4-6 5 1-8-5-5 6-2z" fill="#e7e7f2" /><path d="M5 2l4 8-7 5-5-3 6-2z" fill="#d83a3a" /><path d="M14 24l-7-4-6 5 1-6z" fill="#3c7fd0" />
            <ellipse cx="31" cy="16" rx="9" ry="16" transform="rotate(25 31 16)" fill="#93401b" /><path d="M36 6L27 21M30 8l6 4M28 12l6 4M26 16l6 4" stroke="#f3e4d8" strokeWidth="1.5" />
            <path d="M46 3v12h8V3M50 15v12" stroke="#f0c020" strokeWidth="2" fill="none" />
          </svg>
        </label>
        <button aria-label="Task view" className={task}>
          <svg viewBox="0 0 30 30" className="h-[30px] w-[30px]"><path d="M7 1h22v21H7z" fill="#ececec" /><path d="M0 9h22v20H0z" fill="#6f6f6f" opacity=".9" /></svg>
        </button>
        <button aria-label="Chrome" className="relative flex h-12 w-[55px] shrink-0 items-center justify-center">
          <svg viewBox="0 0 30 30" className="h-[31px] w-[31px]">
            <path d="M15 15L2 7.500A15 15 0 0128 7.500z" fill="#e33b2e" /><path d="M15 15L2 7.500A15 15 0 0015 30l6.500-11z" fill="#2da94f" /><path d="M28 7.500H15V15l6.500 3.700L15 30A15 15 0 0028 7.500z" fill="#fcc934" />
            <circle cx="15" cy="15" r="7" fill="#fff" /><circle cx="15" cy="15" r="5.5" fill="#3b78e7" />
          </svg>
          <span className="absolute bottom-[-4px] h-1 w-2 rounded-full bg-[#9a9a9a]" />
        </button>
        <button aria-label="File Explorer" className={task}>
          <svg viewBox="0 0 30 28" className="h-7 w-[30px]"><path d="M0 1h11l3 4h16v10H0z" fill="#e0a11c" /><path d="M0 7h30v20H0z" fill="#ffcd45" /><path d="M5 27v-5l3-3h14l3 3v5z" fill="#1876c8" /><path d="M9 23h12" stroke="#0a4a8c" strokeWidth="2" /></svg>
        </button>
        <button aria-label="Outlook" className={task}>
          <svg viewBox="0 0 30 28" className="h-7 w-[30px]"><path d="M4 11L17 0l13 11v14l-3 3H7l-3-3z" fill="#1f8fe8" /><path d="M13 8l4-8 13 11-12 9z" fill="#1858b0" /><path d="M30 11v14l-3 3H9z" fill="#4fc8f7" /><rect x="0" y="7" width="15" height="15" rx="1" fill="#0f6fd0" /><circle cx="7.5" cy="14.500" r="4" stroke="#fff" strokeWidth="2.2" fill="none" /></svg>
        </button>
        <button aria-label="WhatsApp" className={task}>
          <svg viewBox="0 0 30 30" className="h-[31px] w-[31px]"><path d="M2 28l2-7A13 13 0 1115 28c-2 0-4-.5-6-1.500z" fill="none" stroke="#28d366" strokeWidth="2.6" /><path d="M10 8l2 0 1.500 3.500L12 13c1 2.500 3 4 5 5l1.500-1.500L22 18v2c-1 2-3 2.500-5 2-5-1.500-8-5-9-9 0-2 .5-4 2-5z" fill="#28d366" /></svg>
        </button>
        <button aria-label="ETABS" className="relative flex h-[50px] w-[50px] shrink-0 items-center justify-center rounded-md bg-[#2b2b2b]">
          <svg viewBox="0 0 32 30" className="h-[30px] w-8"><path d="M8 0h22l-2 30H16z" fill="#6a7890" /><path d="M11 3h14l-8 24h-4z" fill="#38465c" /><path d="M22 0h8l-2 30h-5z" fill="#8ea0bc" /><rect x="0" y="6" width="17" height="19" fill="#0e74d8" /><path d="M12.500 10H6v11h6.500M6 15.500h6" stroke="#fff" strokeWidth="2.5" fill="none" /></svg>
          <span className="absolute bottom-0 h-[3px] w-5 rounded-full bg-[#4cc2ff]" />
        </button>
      </nav>
      <div className="flex flex-1 items-center justify-end">
        <button aria-label="Hidden icons" className="w-10"><ChevronUp className="mx-auto h-5 w-5" strokeWidth={2.2} /></button>
        <svg viewBox="0 0 22 18" className="mx-2.5 h-[18px] w-[22px]" aria-label="OneDrive paused"><path d="M3 13a4 4 0 011-7 7 7 0 0112-2c3 1 4 4 3 8z" fill="#bdbdbd" /><circle cx="15" cy="12" r="5.5" fill="#6c6c6c" /><path d="M13.500 9.500v5M16.500 9.500v5" stroke="#fff" strokeWidth="1.3" /></svg>
        <span className="mx-2.5 w-8 text-center font-['DejaVu_Sans',sans-serif] text-[15px]">ع</span>
        <span className="ml-1 flex items-center gap-2.5 pl-2">
          <Wifi className="h-5 w-5" strokeWidth={2} />
          <Volume2 className="h-5 w-5" strokeWidth={1.7} />
          <svg viewBox="0 0 22 18" className="h-[18px] w-[22px]" aria-label="Battery"><rect x="3" y="6" width="16" height="10" rx="2" fill="none" stroke="#fff" strokeWidth="1.6" /><rect x="5" y="8" width="9" height="6" fill="#fff" /><path d="M20 9v4" stroke="#fff" strokeWidth="2" /><path d="M1 12C0 6 4 3 7 1c3 4 3 9-1 11z" fill="#fff" stroke="#1c1c1c" /></svg>
        </span>
        <time className="ml-5 mr-6 text-right text-[14px] leading-5">9:38 AM<br />4/24/2025</time>
      </div>
    </footer>
  );
}

export default function App() {
  return (
    <div className="relative flex h-screen flex-col overflow-hidden bg-[#d6d6d6] font-['Open_Sans','Noto_Sans',sans-serif]">
      <div className="flex h-[29px] shrink-0 items-center bg-[#f2f2f2] pl-0.5 text-black">
        <svg viewBox="0 0 20 20" className="h-5 w-5" aria-hidden="true"><rect width="20" height="20" fill="#0e74d8" /><path d="M14.500 4.500H7v11h7.500M7 10h6.500" stroke="#fff" strokeWidth="3" fill="none" /></svg>
        <h1 className="ml-[5px] text-[14px]">ETABS Ultimate 22.0.0 - MOL5</h1>
        <div className="ml-auto flex">
          <button aria-label="Minimize" className="flex w-[58px] justify-center"><Minus className="h-4 w-4" strokeWidth={1.5} /></button>
          <button aria-label="Restore" className="flex w-[58px] justify-center"><svg viewBox="0 0 14 14" className="h-3.5 w-3.5"><path d="M1 4h8v9H1zM4 1.500h6.500a2 2 0 012 2V11" fill="none" stroke="#000" strokeWidth="1.2" /></svg></button>
          <button aria-label="Close" className="flex w-[60px] justify-center"><X className="h-4 w-4" strokeWidth={1.5} /></button>
        </div>
      </div>
      <nav className="flex h-[30px] shrink-0 items-center gap-6 bg-gradient-to-b from-[#fcfcfc] to-[#f0f0f0] pb-0.5 pl-[11px] text-[14px] text-[#3a3440]">
        {menus.map((m) => <button key={m}>{m}</button>)}
      </nav>
      <div className="flex h-[35px] shrink-0 items-stretch border-b border-[#9c9c9c]">
        <div className="flex items-center rounded-r bg-[#f1f1f1] pr-px">
          <span className="mr-[6px] h-7 w-2 shrink-0 border-r-2 border-dotted border-white bg-[#e2e2e2]" />
          {topBar.map((n, i) => <ToolItem key={i} n={n} />)}
        </div>
        <div className="ml-[38px] flex items-center rounded-r bg-[#f1f1f1]">
          <span className="h-8 w-2.5 shrink-0 border-l-2 border-dotted border-white bg-[#e2e2e2]" />
          {sectionBar.map((n, i) => <ToolItem key={i} n={n} />)}
        </div>
      </div>
      <main className="flex min-h-0 flex-1">
        <SideBar />
        <Explorer />
        <section className="ml-1 flex min-w-0 flex-1 flex-col border-b-2 border-l-2 border-[#a8a8a8] bg-white shadow-[-4px_0_0_#f4f4f4]">
          <header className="flex h-[29px] shrink-0 items-end border-b-2 border-[#8f8f8f] bg-[#d6d6d6] pl-4 pr-2">
            <h2 className="flex h-[25px] w-[129px] items-center justify-center rounded-t-md border-2 border-b-0 border-[#6f7680] bg-gradient-to-b from-[#bcd3ee] to-[#9bb9dc] text-[14px] text-[#1b1b2b]">3-D View</h2>
            <span className="ml-auto flex h-full items-center pt-0.5"><PaneButtons /></span>
          </header>
          <div className="min-h-0 flex-1 overflow-hidden"><ModelView /></div>
        </section>
      </main>
      <div className="flex h-8 shrink-0 items-center gap-0.5 bg-[#d8d8d8] pb-0.5 pl-[19px] pr-0.5 text-[13px] text-[#2a2434]">
        <span className="mr-auto">3-D View</span>
        {[["Story option", "One Story"], ["Coordinate system", "Global"]].map(([l, v]) => (
          <span key={l} className="relative flex h-6 w-[108px] items-center border-b border-[#b4b4b4] bg-[#fcfcfc]">
            <select aria-label={l} className="h-full w-full appearance-none bg-transparent pl-1"><option>{v}</option></select>
            <ChevronDown className="pointer-events-none absolute right-1 h-3.5 w-3.5 text-[#777]" />
          </span>
        ))}
        <button className="ml-0.5 h-6 w-[63px] rounded border border-[#bfbfbf] bg-[#f4f4f4]">Units...</button>
      </div>
      <TaskBar />
      <div aria-hidden="true" className="pointer-events-none absolute inset-x-0 bottom-5 flex flex-col items-center text-[#a0a0a0]/45">
        <span className="font-['DejaVu_Sans',sans-serif] text-[66px] font-bold leading-[78px] text-[#a0a0a0]/35" lang="ar">مستقل</span>
        <span className="text-[36px] font-bold leading-[50px]">mostaql.com</span>
      </div>
    </div>
  );
}
